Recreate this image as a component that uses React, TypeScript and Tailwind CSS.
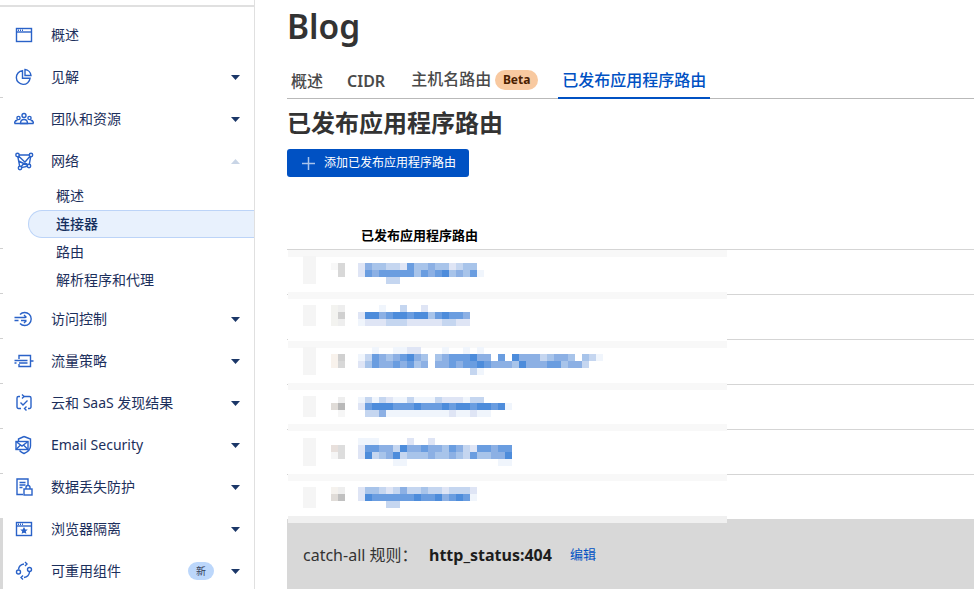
const cjk = '"Noto Sans", "Noto Sans CJK SC", sans-serif';

const iconClass = 'h-5 w-5 shrink-0 fill-none stroke-[#2a62c8] stroke-[1.4]';

const icons: Record<string, React.ReactNode> = {
  overview: (
    <>
      <rect x="2.500" y="3.500" width="15" height="13" />
      <path d="M2.500 7h15" />
      <path d="M4 5.200h1M6 5.200h1M8 5.200h1" />
    </>
  ),
  insight: (
    <>
      <path d="M8.500 3.600a6.900 6.900 0 1 0 7.600 7.600H8.500z" />
      <path d="M11 2.500a6.600 6.600 0 0 1 6 6h-6z" />
    </>
  ),
  team: (
    <>
      <circle cx="10" cy="6.500" r="2" />
      <circle cx="4.500" cy="9" r="1.600" />
      <circle cx="15.500" cy="9" r="1.600" />
      <path d="M6.500 14.500c0-2.800 1.500-4 3.500-4s3.500 1.200 3.500 4z" />
      <path d="M.5 14.500c0-2 1.200-3.200 3-3.200M19.500 14.500c0-2-1.200-3.200-3-3.200M.5 14.500h19" />
    </>
  ),
  network: (
    <>
      <path d="M3.500 4H17l-2 11-9 2zM3.500 4L15 15M17 4L6 17M4.500 10l10.500 5" />
      <circle cx="3.500" cy="4" r="1.700" className="fill-white" />
      <circle cx="17" cy="4" r="1.700" className="fill-white" />
      <circle cx="15" cy="15" r="1.700" className="fill-white" />
      <circle cx="6" cy="17" r="1.700" className="fill-white" />
    </>
  ),
  access: (
    <>
      <path d="M6 5.500a6.500 6.500 0 1 1 0 9" />
      <path d="M.5 8.500h11M.5 11.500h4M7 11.500h5.500M10 6l2.500 2.500M10 14l2.500-2.500" />
    </>
  ),
  traffic: (
    <>
      <path d="M5 8V4.500h11.500v11H5V13" />
      <path d="M.5 9.500h13M.5 12h2M5 12h8.500M16.500 10h3" />
    </>
  ),
  cloud: (
    <>
      <path d="M6 3.500H4.500A1.500 1.500 0 0 0 3 5v9a1.500 1.500 0 0 0 1.500 1.500H7M10 3.500h5.500A1.500 1.500 0 0 1 17 5v9a1.500 1.500 0 0 1-1.500 1.500H14" />
      <path d="M6.500 9.500l2.500 2.500 4.500-4.500" />
      <path d="M8 1.500l2 2-2 2M12.500 13.500l-2 2 2 2" />
    </>
  ),
  email: (
    <>
      <path d="M10 1.500l6.500 2.500v7c0 3.500-3 6-6.500 7.500-2-.8-3.500-1.800-4.500-3M4.500 6V4l5.500-2.500" />
      <rect x="2" y="6.500" width="12" height="8" />
      <path d="M2 6.500l6 4.500 6-4.500M2 14.500L6.500 10M14 14.500L9.500 10" />
    </>
  ),
  dlp: (
    <>
      <path d="M9 17.500H3V2h11v7" />
      <path d="M5.500 5.500h6M5.500 8h6M5.500 10.500h3" />
      <rect x="10" y="12" width="8" height="6" />
      <path d="M12 12v-1.500a2 2 0 0 1 4 0V12" />
    </>
  ),
  browser: (
    <>
      <rect x="2.500" y="3.500" width="15" height="13" />
      <path d="M2.500 7h15" />
      <path d="M4 5.200h1M6 5.200h1M8 5.200h1" />
      <path d="M10 9.500l.7 1.400 1.500.2-1.100 1 .3 1.500-1.400-.7-1.400.7.3-1.500-1.100-1 1.500-.2z" className="fill-[#2a62c8]" />
    </>
  ),
  reuse: (
    <>
      <circle cx="4.500" cy="11" r="2" />
      <circle cx="15.500" cy="8.500" r="2" />
      <path d="M4.500 8.500c.3-3 2-5 5.500-5.500M15.500 11c-.3 3-2 5-5.500 5.500" />
      <path d="M11 1l2 2-2 2M9 14.500l-2 2 2 2" />
    </>
  )
};

function NavIcon({name}: {name: string}) {
  return (
    <svg viewBox="0 0 20 20" className={iconClass}>
      {icons[name]}
    </svg>
  );
}

function Caret({open}: {open?: boolean}) {
  return (
    <svg viewBox="0 0 9 5" className={open ? 'h-[5px] w-[9px] fill-[#c9d5e6]' : 'h-[5px] w-[9px] fill-[#1b3768]'}>
      <path d={open ? 'M4.500 0L9 5H0z' : 'M0 0h9L4.500 5z'} />
    </svg>
  );
}

function NavItem({icon, label, caret = true, open, badge}: {icon: string; label: string; caret?: boolean; open?: boolean; badge?: string}) {
  return (
    <div className="flex h-[42px] items-center gap-[17px] pl-[11px] pr-[14px] text-sm text-[#1c2f5c]">
      <NavIcon name={icon} />
      <span className="flex-1">{label}</span>
      {badge && (
        <span className="flex h-[18px] w-[26px] items-center justify-center rounded-full bg-[#bcd7fb] text-[10px] text-[#33415c]">
          {badge}
        </span>
      )}
      {caret && <Caret open={open} />}
    </div>
  );
}

function SubItem({label, active}: {label: string; active?: boolean}) {
  return active ? (
    <div className="ml-[25px] flex h-[28px] items-center rounded-l-full border border-r-0 border-[#bcd4f8] bg-[#e8f1fd] pl-[27px] text-sm font-medium text-[#15305f]">
      {label}
    </div>
  ) : (
    <div className="flex h-[28px] items-center pl-[53px] text-sm text-[#1c2f5c]">{label}</div>
  );
}

function Sidebar() {
  return (
    <aside className="w-[252px] shrink-0 border-r border-[#e0e0e0] pt-[14px]">
      <NavItem icon="overview" label="概述" caret={false} />
      <NavItem icon="insight" label="见解" />
      <NavItem icon="team" label="团队和资源" />
      <NavItem icon="network" label="网络" open />
      <div className="pb-[4px]">
        <SubItem label="概述" />
        <SubItem label="连接器" active />
        <SubItem label="路由" />
        <SubItem label="解析程序和代理" />
      </div>
      <NavItem icon="access" label="访问控制" />
      <NavItem icon="traffic" label="流量策略" />
      <NavItem icon="cloud" label="云和 SaaS 发现结果" />
      <NavItem icon="email" label="Email Security" />
      <NavItem icon="dlp" label="数据丢失防护" />
      <NavItem icon="browser" label="浏览器隔离" />
      <NavItem icon="reuse" label="可重用组件" badge="新" />
    </aside>
  );
}

// levels of the pixelated url text, '.' is a hole
const tint: Record<string, string> = {
  '1': '#f0f5fc',
  '2': '#dfe5f5',
  '3': '#c5d6f0',
  '4': '#a8c4ea',
  '5': '#8cb0e4',
  '6': '#6a9de0',
  '7': '#4d8cdb'
};

const urlRows: {y: number; cells: string}[] = [
  {y: 263, cells: '25443326445442344'},
  {y: 270, cells: '265666664656745461'},
  {y: 277, cells: '....33'},
  {y: 305, cells: '...1..3..2'},
  {y: 312, cells: '2775677677467665'},
  {y: 319, cells: '1222333222223322'},
  {y: 347, cells: '..1..1122...1..1.1'},
  {y: 354, cells: '1365456754.45666755.6.755534554.431'},
  {y: 361, cells: '2465565645.5565667655547555664553'},
  {y: 368, cells: '................31'},
  {y: 397, cells: '131321131113222133'},
  {y: 403, cells: '2677766676667677677671'},
  {y: 410, cells: '.335111111111211211'},
  {y: 438, cells: '111....2..2'},
  {y: 445, cells: '2665537556554653266566'},
  {y: 452, cells: '2734573444544543644557'},
  {y: 459, cells: '.....11.............11'},
  {y: 487, cells: '24432353343323332'},
  {y: 494, cells: '27666666766756761'},
  {y: 501, cells: '....33'}
];

// x, y, colour of the pale cells in the two left columns
const greyCells: [number, number, string][] = [
  [338, 263, '#d8d8d8'], [338, 270, '#d8d8d8'], [331, 263, '#f8f8f8'],
  [331, 305, '#f3f3f0'], [331, 312, '#f3f3f0'], [331, 319, '#f3f3f0'],
  [338, 305, '#eeeeee'], [338, 312, '#d0d0d0'], [338, 319, '#eeeeee'],
  [331, 354, '#f8f2ec'], [331, 361, '#f8f2ec'], [338, 354, '#d0d0d0'], [338, 361, '#d8d8d8'],
  [331, 403, '#e0dcd8'], [338, 397, '#eeeeee'], [338, 403, '#b8b8b8'], [338, 410, '#f6f6f6'],
  [331, 445, '#e8e0dc'], [331, 452, '#f5f5f5'], [338, 445, '#dddddd'], [338, 452, '#dddddd'],
  [331, 487, '#f5f2ee'], [331, 494, '#e0dcd8'], [338, 487, '#eeeeee'], [338, 494, '#c0c0c0']
];

const paleBlocks: [number, number][] = [[256, 28], [305, 21], [347, 28], [396, 21], [438, 28], [487, 21]];
const stripes: [number, string][] = [[250, '#f8f8f8'], [292, '#f8f8f8'], [341, '#f8f8f8'], [383, '#f8f8f8'], [424, '#f8f8f8'], [474, '#f8f8f8'], [516, '#f0f0f0']];

function Mosaic() {
  return (
    <svg
      viewBox="288 250 439 273"
      shapeRendering="crispEdges"
      className="absolute left-[1px] top-[73px] h-[273px] w-[439px]"
    >
      <rect x="288" y="250" width="439" height="273" fill="#fff" />
      {stripes.map(([y, fill]) => (
        <rect key={y} x="288" y={y} width="439" height="7" fill={fill} />
      ))}
      {paleBlocks.map(([y, h]) => (
        <rect key={y} x="303" y={y} width="13" height={h} fill="#f5f5f5" />
      ))}
      {greyCells.map(([x, y, fill]) => (
        <rect key={`${x}-${y}`} x={x} y={y} width="7" height="7" fill={fill} />
      ))}
      {urlRows.map((row) =>
        row.cells.split('').map((cell, i) =>
          tint[cell] ? <rect key={`${row.y}-${i}`} x={358 + i * 7} y={row.y} width="7" height="7" fill={tint[cell]} /> : null
        )
      )}
    </svg>
  );
}

function Tabs() {
  return (
    <div className="flex h-[45px] items-end border-b border-[#b9b9b9] text-base font-medium text-[#4a4a4a]">
      <span className="ml-[4px] flex h-[34px] items-start pt-[5px]">概述</span>
      <span className="ml-[24px] flex h-[34px] items-start pt-[5px] font-semibold">CIDR</span>
      <span className="ml-[26px] flex h-[34px] items-start pt-[3px]">主机名路由</span>
      <span className="mb-[8px] ml-[4px] flex h-[20px] w-[43px] items-center justify-center self-end rounded-full bg-[#f8c9a0] text-xs font-bold text-[#4a2000]">
        Beta
      </span>
      <span className="-mb-px ml-[20px] flex h-[34px] w-[152px] items-start justify-center border-b-2 border-[#0051c3] pt-[3px] text-[#0051c3]">
        已发布应用程序路由
      </span>
    </div>
  );
}

export default function App() {
  return (
    <div className="relative flex h-[589px] w-[974px] overflow-hidden bg-white" style={{fontFamily: cjk}}>
      <div className="flex h-[589px] w-[3px] shrink-0 flex-col">
        <div className="mt-[97px] h-px bg-[#d0d0d0]" />
        <div className="mt-[150px] h-px bg-[#d0d0d0]" />
        <div className="mt-[44px] h-px bg-[#d0d0d0]" />
        <div className="mt-[44px] h-px bg-[#d0d0d0]" />
        <div className="mt-[44px] h-px bg-[#d0d0d0]" />
        <div className="mt-[44px] h-px bg-[#d0d0d0]" />
        <div className="mt-[44px] h-px bg-[#d0d0d0]" />
        <div className="mt-[44px] h-[71px] bg-[#d8d8d8]" />
      </div>
      <div className="absolute left-0 top-[5px] h-[2px] w-[255px] bg-[#e0e0e0]" />
      <Sidebar />
      <main className="flex min-w-0 flex-1 flex-col pl-[32px]">
        <div className="h-[54px]">
          <h1 className="flex h-[52px] items-center text-[33.500px] font-semibold text-[#333333]">Blog</h1>
        </div>
        <Tabs />
        <h2 className="flex h-[48px] items-center text-2xl font-bold text-[#333333]">已发布应用程序路由</h2>
        <button
          type="button"
          className="mt-[2px] flex h-[28px] w-[182px] items-center rounded-[3px] bg-[#0051c3] pl-[15px] text-xs text-white"
        >
          <svg viewBox="0 0 13 13" className="mr-[9px] h-[13px] w-[13px] fill-none stroke-[#a9c4ec] stroke-[1.500]">
            <path d="M6.500 0v13M0 6.500h13" />
          </svg>
          添加已发布应用程序路由
        </button>
        <div className="relative flex-1">
          <div className="flex h-[73px] items-end border-b border-[#d5d5d5] pb-[4px] pl-[74px] text-[13px] font-semibold text-black">
            已发布应用程序路由
          </div>
          {[0, 1, 2, 3, 4].map((row) => (
            <div key={row} className="h-[45px] border-b border-[#d5d5d5]" />
          ))}
          <Mosaic />
        </div>
        <div className="flex h-[70px] shrink-0 items-center bg-[#d8d8d8] pl-[16px] pt-[2px] text-base text-[#333333]">
          <span className="w-[126px]">catch-all 规则：</span>
          <span className="w-[141px] font-bold text-[#1d1d1d]">http_status:404</span>
          <span className="text-[13px] text-[#0051c3]">编辑</span>
        </div>
      </main>
    </div>
  );
}
